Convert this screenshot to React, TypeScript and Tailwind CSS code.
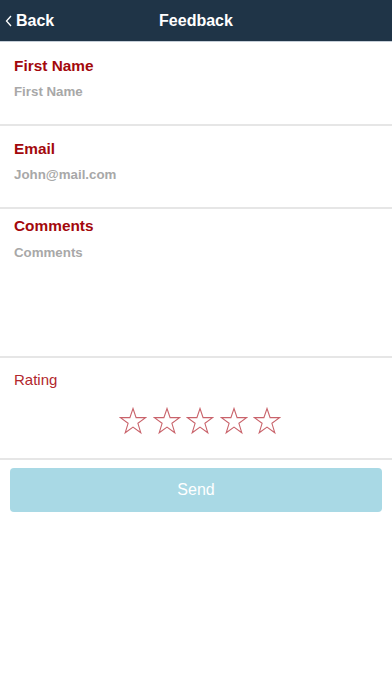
import React from "react";

function Star() {
  return (
    <svg width="28" height="28" viewBox="0 0 28 28" className="block">
      <polygon
        points="14,1.5 17.1,10.6 26.6,10.6 18.9,16.3 21.8,25.8 14,20.1 6.2,25.8 9.1,16.3 1.4,10.6 10.9,10.6"
        fill="none"
        stroke="#c9636b"
        strokeWidth="1.1"
        strokeLinejoin="miter"
      />
    </svg>
  );
}

export default function App() {
  return (
    <div
      className="w-[392px] h-[696px] bg-white overflow-hidden"
      style={{ fontFamily: '"Liberation Sans", Arial, sans-serif' }}
    >
      <header className="relative h-[42px] bg-[#1f3447] border-b border-[#c5ced8] flex items-center">
        <div className="flex items-center pl-[5px] gap-[4px] text-white">
          <svg width="7" height="12" viewBox="0 0 7 12">
            <path d="M6 1 L1.5 6 L6 11" fill="none" stroke="white" strokeWidth="1.3" />
          </svg>
          <span className="text-[16px] font-bold leading-none">Back</span>
        </div>
        <div className="absolute inset-0 flex items-center justify-center pointer-events-none">
          <span className="text-white text-[16px] font-bold leading-none">Feedback</span>
        </div>
      </header>

      <section className="h-[84px] pt-[15px] px-[14px] border-b-2 border-[#e6e6e6]">
        <div className="text-[15.4px] leading-[18px] font-bold text-[#a3080c]">First Name</div>
        <div className="mt-[9px] text-[13.3px] leading-[16px] font-bold text-[#a8a8a8]">First Name</div>
      </section>

      <section className="h-[83px] pt-[14px] px-[14px] border-b-2 border-[#e6e6e6]">
        <div className="text-[15.4px] leading-[18px] font-bold text-[#a3080c]">Email</div>
        <div className="mt-[9px] text-[13.3px] leading-[16px] font-bold text-[#a8a8a8]">John@mail.com</div>
      </section>

      <section className="h-[149px] pt-[8px] px-[14px] border-b-2 border-[#e6e6e6]">
        <div className="text-[15.4px] leading-[18px] font-bold text-[#a3080c]">Comments</div>
        <div className="mt-[10px] text-[13.3px] leading-[16px] font-bold text-[#a8a8a8]">Comments</div>
      </section>

      <section className="h-[102px] pt-[13px] border-b-2 border-[#e6e6e6]">
        <div className="px-[14px] text-[15px] leading-[18px] text-[#b2272d]">Rating</div>
        <div className="mt-[18px] flex justify-center gap-[5.5px] pl-[8px]">
          <Star />
          <Star />
          <Star />
          <Star />
          <Star />
        </div>
      </section>

      <div className="px-[10px] pt-[8px]">
        <button className="w-full h-[44px] rounded-[4px] bg-[#a9d9e5] text-white text-[16px] flex items-center justify-center">
          Send
        </button>
      </div>
    </div>
  );
}
